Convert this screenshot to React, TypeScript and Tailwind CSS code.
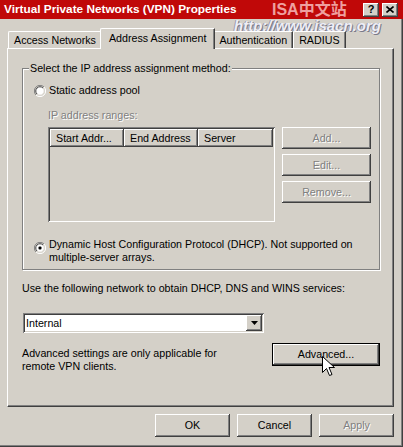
import React from "react";

const raised =
  "shadow-[inset_-1px_-1px_#404040,inset_1px_1px_#ffffff,inset_-2px_-2px_#808080,inset_2px_2px_#d4d0c8]";
const sunken =
  "shadow-[inset_1px_1px_#808080,inset_-1px_-1px_#ffffff,inset_2px_2px_#404040,inset_-2px_-2px_#d4d0c8]";
const disabledText = "text-[#808080] [text-shadow:1px_1px_0_#ffffff]";

function Btn({
  label,
  disabled,
  className = "",
}: {
  label: string;
  disabled?: boolean;
  className?: string;
}) {
  return (
    <div
      className={`flex items-center justify-center bg-[#d4d0c8] ${raised} ${
        disabled ? disabledText : "text-black"
      } ${className}`}
    >
      {label}
    </div>
  );
}

function Radio({ checked }: { checked?: boolean }) {
  return (
    <svg width="12" height="12" viewBox="0 0 12 12" className="shrink-0">
      <path d="M10 2A5.5 5.5 0 0 0 2 10" fill="none" stroke="#808080" strokeWidth="1" />
      <path d="M2 10A5.5 5.5 0 0 0 10 2" fill="none" stroke="#ffffff" strokeWidth="1" />
      <circle cx="6" cy="6" r="4.5" fill="#ffffff" />
      <path d="M9 3A4.2 4.2 0 0 0 3 9" fill="none" stroke="#404040" strokeWidth="1" />
      <path d="M3 9A4.2 4.2 0 0 0 9 3" fill="none" stroke="#d4d0c8" strokeWidth="1" />
      {checked && <rect x="4.5" y="4.5" width="3" height="3" rx="1" fill="#000000" />}
    </svg>
  );
}

function Tab({ label, active }: { label: string; active?: boolean }) {
  return active ? (
    <div className="relative z-10 -mx-[2px] flex h-[21px] items-start bg-[#d4d0c8] px-[8px] pt-[3px] border-l border-t border-white rounded-tl-[2px] border-r border-r-[#404040] shadow-[inset_-1px_0_#808080]">
      {label}
    </div>
  ) : (
    <div className="mb-[1px] flex h-[17px] items-center bg-[#d4d0c8] px-[5px] border-l border-t border-white rounded-tl-[2px] border-r border-r-[#404040] shadow-[inset_-1px_0_#808080]">
      {label}
    </div>
  );
}

export default function App() {
  return (
    <div className="relative flex h-[447px] w-[403px] flex-col overflow-hidden bg-[#d4d0c8] font-['Liberation_Sans',Arial,sans-serif] text-[10.7px] leading-[13px] text-black shadow-[inset_-1px_-1px_#404040,inset_-2px_-2px_#808080]">
      {/* title bar */}
      <div className="flex h-[19px] items-center bg-[#c00808] pl-[4px] pr-[5px]">
        <span className="text-[11.8px] font-bold text-white">Virtual Private Networks (VPN) Properties</span>
        <div className="ml-auto flex gap-[3px]">
          <div className={`flex h-[14px] w-[16px] items-center justify-center bg-[#d4d0c8] text-[11px] font-bold ${raised}`}>
            ?
          </div>
          <div className={`flex h-[14px] w-[16px] items-center justify-center bg-[#d4d0c8] ${raised}`}>
            <svg width="8" height="7" viewBox="0 0 8 7">
              <path d="M0.5 0.5L7.5 6.5M7.5 0.5L0.5 6.5" stroke="#000" strokeWidth="1.6" />
            </svg>
          </div>
        </div>
      </div>

      {/* tabs */}
      <div className="relative z-10 mt-[9px] flex h-[21px] items-end pl-[4px]">
        <div className="w-[4px]" />
        <Tab label="Access Networks" />
        <Tab label="Address Assignment" active />
        <Tab label="Authentication" />
        <Tab label="RADIUS" />
      </div>

      {/* tab panel */}
      <div className="-mt-[1px] ml-[7px] flex h-[359px] w-[387px] flex-col border-l border-t border-white border-r border-b border-r-[#404040] border-b-[#404040] shadow-[inset_-1px_-1px_#808080]">
        {/* group box */}
        <div className="relative ml-[14px] mt-[19px] flex h-[202px] w-[358px] flex-col border border-[#808080] shadow-[inset_1px_1px_#ffffff,1px_1px_#ffffff]">
          <span className="absolute -top-[7px] left-[6px] bg-[#d4d0c8] px-[1px]">
            Select the IP address assignment method:
          </span>
          <div className="ml-[11px] mt-[15px] flex items-center gap-[3px]">
            <Radio />
            <span>Static address pool</span>
          </div>
          <div className={`ml-[25px] mt-[12px] ${disabledText}`}>IP address ranges:</div>
          <div className="ml-[25px] mt-[5px] flex gap-[7px]">
            <div className={`h-[95px] w-[227px] bg-[#d4d0c8] p-[2px] ${sunken}`}>
              <div className="flex h-[18px]">
                <div className={`flex w-[74px] items-center pl-[6px] ${raised}`}>Start Addr...</div>
                <div className={`flex w-[74px] items-center pl-[6px] ${raised}`}>End Address</div>
                <div className={`flex w-[75px] items-center pl-[6px] ${raised}`}>Server</div>
              </div>
            </div>
            <div className="flex flex-col gap-[5px]">
              <Btn label="Add..." disabled className="h-[22px] w-[89px]" />
              <Btn label="Edit..." disabled className="h-[22px] w-[89px]" />
              <Btn label="Remove..." disabled className="h-[22px] w-[89px]" />
            </div>
          </div>
          <div className="ml-[11px] mt-[16px] flex items-start gap-[3px]">
            <div className="mt-[4px]">
              <Radio checked />
            </div>
            <span>
              Dynamic Host Configuration Protocol (DHCP). Not supported on
              <br />
              multiple-server arrays.
            </span>
          </div>
        </div>

        <div className="ml-[14px] mt-[12px]">
          Use the following network to obtain DHCP, DNS and WINS services:
        </div>

        {/* network select */}
        <div className={`ml-[15px] mt-[18px] flex h-[20px] w-[241px] items-center bg-white p-[2px] ${sunken}`}>
          <span className="flex-1 pl-[1px]">Internal</span>
          <div className={`flex h-[16px] w-[16px] items-center justify-center bg-[#d4d0c8] ${raised}`}>
            <svg width="7" height="4" viewBox="0 0 7 4">
              <path d="M0 0H7L3.5 4Z" fill="#000" />
            </svg>
          </div>
        </div>

        <div className="mt-[10px] flex items-start pr-[13px]">
          <div className="ml-[14px] mt-[4px]">
            Advanced settings are only applicable for
            <br />
            remote VPN clients.
          </div>
          <div className="ml-auto border border-black">
            <Btn label="Advanced..." className="h-[21px] w-[106px]" />
          </div>
        </div>
      </div>

      {/* dialog buttons */}
      <div className="mt-[7px] flex justify-end gap-[7px] pr-[9px]">
        <Btn label="OK" className="h-[23px] w-[75px]" />
        <Btn label="Cancel" className="h-[23px] w-[75px]" />
        <Btn label="Apply" disabled className="h-[23px] w-[75px]" />
      </div>

      {/* watermark */}
      <div className="pointer-events-none absolute left-[272px] top-[1px] text-[16px] font-bold leading-[17px] text-[#eea0a0] font-['Liberation_Sans','Noto_Sans_CJK_SC',sans-serif]">
        ISA中文站
      </div>
      <div className="pointer-events-none absolute left-[234px] top-[18px] text-[15px] font-bold italic leading-[16px] text-[#eeeef6] [text-shadow:1px_1px_0_#7a7a8a,-1px_0_0_#9a9aa8]">
        http://www.isacn.org
      </div>

      {/* mouse cursor */}
      <svg
        className="pointer-events-none absolute left-[322px] top-[356px]"
        width="13"
        height="21"
        viewBox="0 0 13 21"
      >
        <path
          d="M0.5 0.5V16.5L4.5 12.5L7.5 19.5L10 18.5L7 11.5H12.5Z"
          fill="#ffffff"
          stroke="#000000"
          strokeWidth="1"
        />
      </svg>
    </div>
  );
}
